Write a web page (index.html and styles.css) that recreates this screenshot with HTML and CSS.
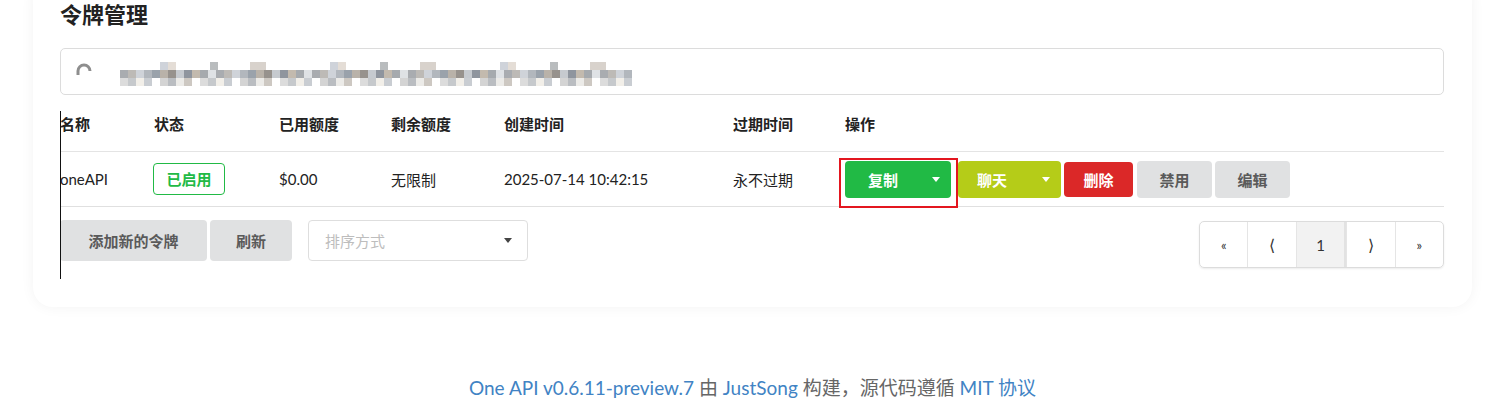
FILE: index.html
```html
<!DOCTYPE html>
<html lang="zh-CN">
<head>
    <meta charset="UTF-8">
    <title>令牌管理</title>
    <link rel="stylesheet" href="styles.css">
</head>
<body>
    <div class="page">
        <div class="card">
            <h2 class="title">令牌管理</h2>

            <!-- search box, content is blurred in the capture -->
            <div class="search">
                <svg class="lock" width="18" height="14" viewBox="0 0 18 14">
                    <path d="M3 12 V8 a6 6 0 0 1 12 0" fill="none" stroke="#8e8e8e" stroke-width="3"/>
                </svg>
                <div class="masked">
                    <div class="mrow top"></div>
                    <div class="mrow mid"></div>
                    <div class="mrow low"></div>
                </div>
            </div>

            <div class="list">
                <table class="tokens">
                    <colgroup>
                        <col style="width:94px">
                        <col style="width:125px">
                        <col style="width:112px">
                        <col style="width:113px">
                        <col style="width:229px">
                        <col style="width:112px">
                        <col>
                    </colgroup>
                    <thead>
                        <tr>
                            <th>名称</th>
                            <th>状态</th>
                            <th>已用额度</th>
                            <th>剩余额度</th>
                            <th>创建时间</th>
                            <th>过期时间</th>
                            <th>操作</th>
                        </tr>
                    </thead>
                    <tbody>
                        <tr>
                            <td>oneAPI</td>
                            <td><span class="tag">已启用</span></td>
                            <td>$0.00</td>
                            <td>无限制</td>
                            <td>2025-07-14 10:42:15</td>
                            <td>永不过期</td>
                            <td>
                                <div class="actions">
                                    <span class="marked">
                                        <button class="btn split green">复制<i class="caret"></i></button>
                                        <span class="mark"></span>
                                    </span>
                                    <button class="btn split olive">聊天<i class="caret"></i></button>
                                    <button class="btn red">删除</button>
                                    <button class="btn grey">禁用</button>
                                    <button class="btn grey">编辑</button>
                                </div>
                            </td>
                        </tr>
                    </tbody>
                </table>

                <div class="toolbar">
                    <button class="btn grey big add">添加新的令牌</button>
                    <button class="btn grey big">刷新</button>
                    <div class="select">
                        <span>排序方式</span>
                        <i class="caret dark"></i>
                    </div>
                    <div class="pager">
                        <a>«</a>
                        <a class="arrow">⟨</a>
                        <a class="active">1</a>
                        <a class="arrow">⟩</a>
                        <a>»</a>
                    </div>
                </div>
            </div>
        </div>

        <div class="footer">
            <a>One API v0.6.11-preview.7</a> 由 <a>JustSong</a> 构建，源代码遵循 <a>MIT 协议</a>
        </div>
    </div>
</body>
</html>
```

FILE: styles.css
```css
/* Base */
body {
    margin: 0;
    background-color: #fff;
    font-family: Lato, "Noto Sans CJK SC", sans-serif;
    font-size: 15px;
    color: #222;
}

.page {
    padding: 0 14px 0 33px;
}

/* Card */
.card {
    margin-top: -20px;
    padding: 20px 28px 28px 27px;
    background-color: #fff;
    border-radius: 20px;
    box-shadow: 0 0 14px rgba(0,0,0,0.05);
}

.title {
    margin: 0;
    font-size: 22px;
    line-height: 30px;
    font-weight: 700;
    color: #222;
}

/* Search box */
.search {
    margin-top: 18px;
    height: 47px;
    box-sizing: border-box;
    border: 1px solid #dcdcdc;
    border-radius: 5px;
    display: flex;
    align-items: center;
    padding-left: 14px;
}

.lock {
    margin-right: 27px;
    margin-top: -4px;
}

.masked {
    width: 512px;
    margin-top: 4px;
}

.mrow {
    height: 8px;
}

.mrow.top {
    margin-left: 10px;
    background: repeating-linear-gradient(90deg,
        #fff 0 30px, #cfd3da 30px 38px, #e4ddd6 38px 46px, #fff 46px 80px,
        #b9bcbe 80px 88px, #fff 88px 120px, #d8d2cc 120px 136px, #fff 136px 170px);
}

.mrow.mid {
    background: repeating-linear-gradient(90deg,
        #a9acb0 0 8px, #bdbab6 8px 16px, #cfd3d9 16px 24px, #b2b7bd 24px 32px,
        #9aa2ab 32px 40px, #b9b2a9 40px 48px, #97928d 48px 56px, #c6cacf 56px 64px,
        #8f959e 64px 72px, #c3baae 72px 80px, #a6aaae 80px 88px, #dfe2e5 88px 96px);
}

.mrow.low {
    background: repeating-linear-gradient(90deg,
        #dcdcdc 0 8px, #c6c9cc 8px 16px, #f2efe9 16px 24px, #c9cdd2 24px 32px,
        #fff 32px 40px, #d4d4d4 40px 48px, #babdc1 48px 56px, #ecebe8 56px 64px,
        #cdc8c2 64px 72px, #fff 72px 80px);
}

/* Token list */
.list {
    position: relative;
    margin-top: 16px;
    padding-bottom: 11px;
}

/* stray 1px marker line at the left edge of the list */
.list::before {
    content: "";
    position: absolute;
    left: 0;
    top: 0;
    bottom: 0;
    border-left: 1px solid #111;
}

.tokens {
    width: 100%;
    border-collapse: collapse;
    table-layout: fixed;
}

.tokens th {
    height: 40px;
    padding: 0;
    text-align: left;
    font-weight: 700;
    line-height: 26px;
    border-bottom: 1px solid #e4e4e4;
    vertical-align: top;
}

.tokens td {
    height: 54px;
    padding: 0;
    border-bottom: 1px solid #e0e0e0;
    vertical-align: middle;
    white-space: nowrap;
}

.tag {
    display: inline-block;
    width: 72px;
    height: 32px;
    line-height: 30px;
    box-sizing: border-box;
    margin-left: -1px;
    border: 1px solid #21ba45;
    border-radius: 4px;
    color: #21ba45;
    font-weight: 700;
    text-align: center;
}

/* Buttons */
.btn {
    display: inline-flex;
    align-items: center;
    justify-content: center;
    height: 37px;
    padding: 0;
    border: none;
    border-radius: 4px;
    font-family: inherit;
    font-size: 15px;
    font-weight: 700;
    cursor: pointer;
}

.btn.green {
    background-color: #21ba45;
    color: #fff;
}

.btn.olive {
    background-color: #b5cc18;
    color: #fff;
}

.btn.red {
    background-color: #db2828;
    color: #fff;
    width: 69px;
    height: 35px;
}

.btn.grey {
    background-color: #e0e1e2;
    color: #5a5a5a;
    width: 75px;
}

.btn.split {
    justify-content: flex-start;
}

.btn.split.green {
    width: 106px;
    padding-left: 23px;
}

.btn.split.olive {
    width: 103px;
    padding-left: 19px;
}

.caret {
    width: 0;
    height: 0;
    border-left: 4.5px solid transparent;
    border-right: 4.5px solid transparent;
    border-top: 5px solid #fff;
    margin-left: auto;
    margin-right: 11px;
}

.caret.dark {
    border-top-color: #444;
    margin-right: 15px;
}

.actions {
    display: flex;
    align-items: center;
}

.actions .btn {
    margin-right: 3px;
}

.actions .btn.red {
    margin-right: 4px;
}

.marked {
    position: relative;
    display: flex;
    margin-right: 4px;
}

/* red annotation frame around the copy button */
.mark {
    position: absolute;
    left: -6px;
    top: -3px;
    width: 119px;
    height: 50px;
    box-sizing: border-box;
    border: 2px solid #e3161f;
}

/* Toolbar under the table */
.toolbar {
    display: flex;
    align-items: flex-start;
    margin-top: 13px;
}

.btn.big {
    height: 41px;
    width: 82px;
    margin-right: 3px;
}

.btn.big.add {
    width: 147px;
}

.select {
    margin-left: 13px;
    width: 220px;
    height: 41px;
    box-sizing: border-box;
    border: 1px solid #dedede;
    border-radius: 4px;
    display: flex;
    align-items: center;
    padding-left: 16px;
    color: #bdbdbd;
}

.pager {
    margin-left: auto;
    margin-top: 1px;
    width: 245px;
    display: flex;
    height: 47px;
    box-sizing: border-box;
    border: 1px solid #dcdcdc;
    border-radius: 5px;
    box-shadow: 0 1px 2px rgba(0,0,0,0.08);
    overflow: hidden;
}

.pager a {
    flex: 1;
    display: flex;
    align-items: center;
    justify-content: center;
    color: #333;
    font-size: 13px;
    border-left: 1px solid #e5e5e5;
}

.pager a:first-child {
    border-left: none;
}

.pager a.arrow {
    font-size: 16px;
}

.pager a.active {
    background-color: #f2f2f2;
    font-size: 15px;
    border-right: 2px solid #e2e2e2;
}

/* Footer */
.footer {
    margin-top: 70px;
    text-align: center;
    font-size: 19px;
    line-height: 22px;
    color: #666;
}

.footer a {
    color: #4183c4;
}
```
